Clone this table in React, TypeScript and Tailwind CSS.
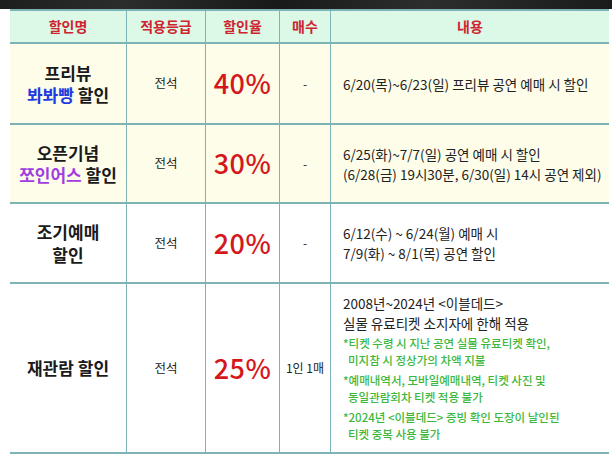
import React from "react";

const font = { fontFamily: '"Noto Sans CJK KR", "Noto Sans", sans-serif' };

function Cell({ children, className = "" }: { children: React.ReactNode; className?: string }) {
  return <div className={`flex items-center justify-center border-r border-[#7eb3b5] ${className}`}>{children}</div>;
}

function Row({ bg, h, name, pct, qty, content }: { bg: string; h: string; name: React.ReactNode; pct: string; qty: React.ReactNode; content: React.ReactNode }) {
  return (
    <div className={`grid grid-cols-[117px_79px_74px_51px_278px] border-b-2 border-[#7eb3b5] ${bg} ${h}`}>
      <Cell className="text-center text-[17px] font-bold leading-[22px] text-[#1a1a1a]">{name}</Cell>
      <Cell className="text-[12.5px] text-[#222]">전석</Cell>
      <Cell className="text-[27px] font-medium text-[#d5171c] tracking-[0.5px]">{pct}</Cell>
      <Cell className="text-[12px] text-[#222]">{qty}</Cell>
      <div className="flex flex-col justify-center pl-[12px] text-[13.5px] leading-[20px] text-[#222]">{content}</div>
    </div>
  );
}

export default function App() {
  return (
    <div style={font} className="w-[612px] h-[458px] overflow-hidden bg-white">
      <div className="h-[9px] bg-[linear-gradient(90deg,#1c1f1e,#2a2d2b_20%,#181a19_45%,#2b2e2c_70%,#1a1c1b)]" />
      <div className="ml-[10px] w-[599px]">
        <div className="grid grid-cols-[117px_79px_74px_51px_278px] h-[35px] border-t-2 border-b-2 border-[#7eb3b5] bg-[#dcf8e6] text-[14px] font-bold text-[#cf2430]">
          <Cell>할인명</Cell>
          <Cell>적용등급</Cell>
          <Cell>할인율</Cell>
          <Cell>매수</Cell>
          <div className="flex items-center justify-center">내용</div>
        </div>
        <Row
          bg="bg-[#fdfde9]"
          h="h-[81px]"
          name={<div><div>프리뷰</div><div><span className="text-[#1f3ce0]">봐봐빵</span> 할인</div></div>}
          pct="40%"
          qty="-"
          content={<div>6/20(목)~6/23(일) 프리뷰 공연 예매 시 할인</div>}
        />
        <Row
          bg="bg-[#fdfde9]"
          h="h-[79px]"
          name={<div><div>오픈기념</div><div><span className="text-[#a23ee0]">쪼인어스</span> 할인</div></div>}
          pct="30%"
          qty="-"
          content={<><div>6/25(화)~7/7(일) 공연 예매 시 할인</div><div>(6/28(금) 19시30분, 6/30(일) 14시 공연 제외)</div></>}
        />
        <Row
          bg="bg-white"
          h="h-[80px]"
          name={<div><div>조기예매</div><div className="mt-[1px]">할인</div></div>}
          pct="20%"
          qty="-"
          content={<><div>6/12(수) ~ 6/24(월) 예매 시</div><div>7/9(화) ~ 8/1(목) 공연 할인</div></>}
        />
        <Row
          bg="bg-white"
          h="h-[170px]"
          name={<div>재관람 할인</div>}
          pct="25%"
          qty="1인 1매"
          content={
            <>
              <div>2008년~2024년 &lt;이블데드&gt;</div>
              <div>실물 유료티켓 소지자에 한해 적용</div>
              <div className="mt-[2px] text-[11.5px] leading-[17px] font-medium text-[#3db83d]">
                <div>*티켓 수령 시 지난 공연 실물 유료티켓 확인,</div>
                <div className="pl-[5px]">미지참 시 정상가의 차액 지불</div>
                <div className="mt-[3px]">*예매내역서, 모바일예매내역, 티켓 사진 및</div>
                <div className="pl-[5px]">동일관람회차 티켓 적용 불가</div>
                <div className="mt-[3px]">*2024년 &lt;이블데드&gt; 증빙 확인 도장이 날인된</div>
                <div className="pl-[5px]">티켓 중복 사용 불가</div>
              </div>
            </>
          }
        />
      </div>
    </div>
  );
}
